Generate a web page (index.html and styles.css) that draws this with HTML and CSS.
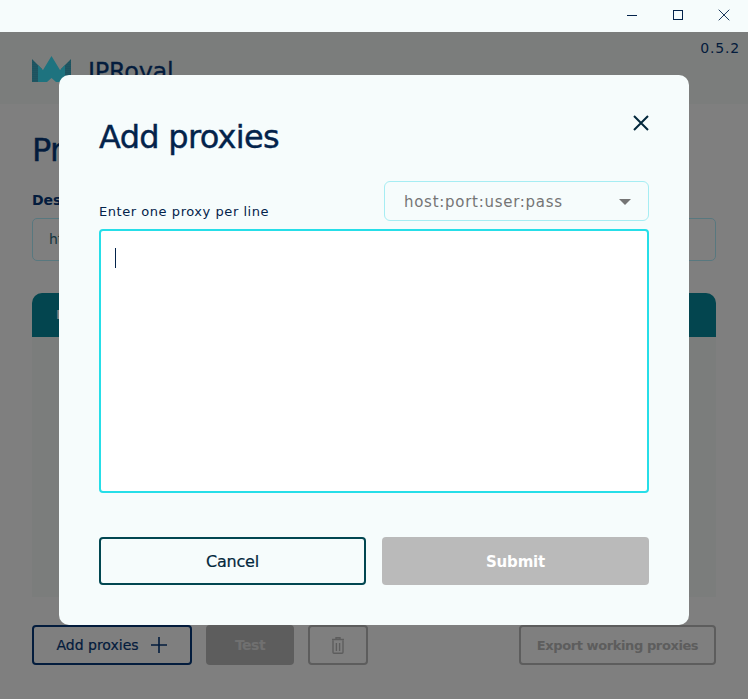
FILE: index.html
```html
<!DOCTYPE html>
<html lang="en">
<head>
<meta charset="utf-8">
<title>IPRoyal Proxy Tester</title>
<link rel="stylesheet" href="styles.css">
</head>
<body>
<div class="window">
  <div class="titlebar">
    <svg class="win-icon" width="12" height="12" viewBox="0 0 12 12"><path d="M1 6.5h10" stroke="#03234b" fill="none"/></svg>
    <svg class="win-icon" width="12" height="12" viewBox="0 0 12 12"><rect x="1.5" y="1.5" width="9" height="9" stroke="#03234b" fill="none"/></svg>
    <svg class="win-icon" width="12" height="12" viewBox="0 0 12 12"><path d="M.7.7l10.6 10.6M11.3.7L.7 11.3" stroke="#03234b" stroke-width=".9" fill="none"/></svg>
  </div>
  <div class="app">
    <header class="app-header">
      <svg class="logo" width="39" height="26" viewBox="0 0 39 26">
        <defs>
          <pattern id="dots" width="2" height="2" patternUnits="userSpaceOnUse">
            <rect width="2" height="2" fill="#2a9db8"/>
            <circle cx="1" cy="1" r=".55" fill="#7fd8ea"/>
          </pattern>
        </defs>
        <path d="M0 3 L10 13 L8 26 H0Z M39 3 L29 13 L31 26 H39Z" fill="url(#dots)"/>
        <path d="M6 9 L11 14 L19.5 0 L28 14 L33 9 V26 H24 L19.5 22 L15 26 H6Z" fill="#3ce6ff"/>
      </svg>
      <span class="brand">IPRoyal</span>
      <span class="version">0.5.2</span>
    </header>
    <main class="content">
      <h1 class="page-title">Proxy tester</h1>
      <label class="dest-label">Destination</label>
      <div class="dest-input">https://ipv4.icanhazip.com</div>
      <div class="table">
        <div class="table-head">IP</div>
        <div class="table-body"></div>
      </div>
      <div class="actions">
        <button class="btn btn-add">Add proxies
          <svg width="18" height="18" viewBox="0 0 18 18"><path d="M9 1v16M1 9h16" stroke="#06397a" stroke-width="1.6" fill="none"/></svg>
        </button>
        <button class="btn btn-test">Test</button>
        <button class="btn btn-trash" aria-label="Delete">
          <svg width="12" height="17" viewBox="0 0 12 17"><path d="M1 3.5v11.8q0 1 1 1h8q1 0 1-1V3.5M0 2.5h12M4 2V.8h4V2M4.4 6v8M7.6 6v8" stroke="#bababa" stroke-width="1.4" fill="none"/></svg>
        </button>
        <button class="btn btn-export">Export working proxies</button>
      </div>
    </main>
  </div>
  <div class="overlay">
    <section class="modal">
      <div class="modal-head">
        <h2 class="modal-title">Add proxies</h2>
        <svg class="modal-close" width="16" height="16" viewBox="0 0 16 16"><path d="M1 1l14 14M15 1L1 15" stroke="#03283c" stroke-width="2" fill="none"/></svg>
      </div>
      <div class="field-head">
        <span class="field-label">Enter one proxy per line</span>
        <div class="select">
          <span class="select-value">host:port:user:pass</span>
          <svg width="12" height="6" viewBox="0 0 12 6"><path d="M0 0h12L6 6z" fill="#757575"/></svg>
        </div>
      </div>
      <div class="textarea"><span class="caret"></span></div>
      <div class="modal-actions">
        <button class="mbtn mbtn-cancel">Cancel</button>
        <button class="mbtn mbtn-submit">Submit</button>
      </div>
    </section>
  </div>
</div>
</body>
</html>
```

FILE: styles.css
```css
* { box-sizing: border-box; }
html, body { margin: 0; height: 100%; }
body { font-family: "DejaVu Sans", Verdana, sans-serif; color: #03234b; background: #fff; overflow: hidden; }
button { font-family: inherit; cursor: default; }

.window { position: relative; width: 748px; height: 699px; display: flex; flex-direction: column; }
.titlebar { position: relative; z-index: 2; height: 32px; background: #f6fcfc; display: flex; justify-content: flex-end; align-items: center; gap: 34px; padding: 0 18px 2px 0; flex: none; }
.win-icon { display: block; }

.app { flex: 1; display: flex; flex-direction: column; }
.app-header { position: relative; height: 72px; background: #f7fbf8; display: flex; align-items: flex-start; padding: 24px 32px 0; flex: none; overflow: hidden; }
.logo { flex: none; }
.brand { margin-left: 17px; font-size: 24px; line-height: 32px; letter-spacing: -.3px; color: #06397a; -webkit-text-stroke: .3px #06397a; }
.version { position: absolute; right: 8px; top: 8px; font-size: 14px; letter-spacing: .85px; color: #06397a; }

.content { flex: 1; padding: 26px 32px 0; display: flex; flex-direction: column; background: #fff; }
.page-title { margin: 0; font-size: 32px; line-height: 40px; font-weight: 500; letter-spacing: -.7px; color: #06397a; -webkit-text-stroke: .4px #06397a; }
.dest-label { margin-top: 21px; font-size: 14px; line-height: 18px; font-weight: 700; color: #06397a; }
.dest-input { margin-top: 9px; height: 43px; border: 1px solid #b0f0ff; border-radius: 5px; padding: 0 16px; line-height: 41px; font-size: 14px; color: #2a6a7a; }
.table { margin-top: 32px; height: 304px; display: flex; flex-direction: column; background: #f7fbf8; border-radius: 10px 10px 0 0; }
.table-head { height: 44px; background: #068a9e; border-radius: 10px 10px 0 0; padding: 0 24px; line-height: 44px; font-size: 13px; font-weight: 700; color: #fff; flex: none; }
.table-body { flex: 1; }

.actions { margin-top: 28px; display: flex; align-items: stretch; gap: 14px; height: 40px; }
.btn { height: 40px; border-radius: 4px; font-size: 14px; padding: 0; background: transparent; display: flex; align-items: center; justify-content: center; }
.btn-add { width: 160px; border: 2px solid #06397a; color: #06397a; gap: 11px; -webkit-text-stroke: .2px #06397a; }
.btn-test { width: 88px; border: 0; background: #bababa; color: #e0e0e0; font-weight: 700; letter-spacing: -.5px; }
.btn-trash { width: 60px; border: 2px solid #bababa; }
.btn-export { width: 197px; margin-left: auto; border: 2px solid #bababa; color: #bababa; font-weight: 700; font-size: 13px; letter-spacing: -.4px; }

.overlay { position: absolute; inset: 0; z-index: 1; background: rgba(0,0,0,.5); display: flex; align-items: center; justify-content: center; }
.modal { width: 630px; height: 550px; background: #f6fcfc; border-radius: 10px; padding: 40px; display: flex; flex-direction: column; }
.modal-head { display: flex; justify-content: space-between; align-items: flex-start; height: 66px; flex: none; }
.modal-title { margin: 0; font-size: 32px; line-height: 44px; font-weight: 500; letter-spacing: -.7px; color: #03234b; -webkit-text-stroke: .4px #03234b; }
.modal-close { margin: 0 0 0 auto; }
.field-head { display: flex; justify-content: space-between; align-items: flex-end; height: 40px; flex: none; }
.field-label { font-size: 13px; line-height: 18px; letter-spacing: .55px; }
.select { width: 265px; height: 40px; border: 1px solid #a6edf3; border-radius: 6px; display: flex; align-items: center; justify-content: space-between; padding: 2px 17px 0 19px; font-size: 15px; color: #757575; }
.select-value { letter-spacing: .72px; }
.textarea { margin-top: 8px; height: 264px; background: #fff; border: 2px solid #26dee8; border-radius: 4px; padding: 17px 14px; flex: none; }
.caret { display: block; width: 1px; height: 20px; background: #03234b; }
.modal-actions { margin-top: 44px; display: grid; grid-template-columns: 1fr 1fr; gap: 16px; }
.mbtn { min-width: 0; padding: 2px 0 0; height: 48px; border-radius: 4px; font-size: 16px; letter-spacing: -.2px; }
.mbtn-cancel { background: transparent; border: 2px solid #024751; color: #03283c; -webkit-text-stroke: .2px #03283c; }
.mbtn-submit { background: #bababa; border: 0; color: #fff; font-weight: 700; font-size: 15px; letter-spacing: -.2px; }
```
